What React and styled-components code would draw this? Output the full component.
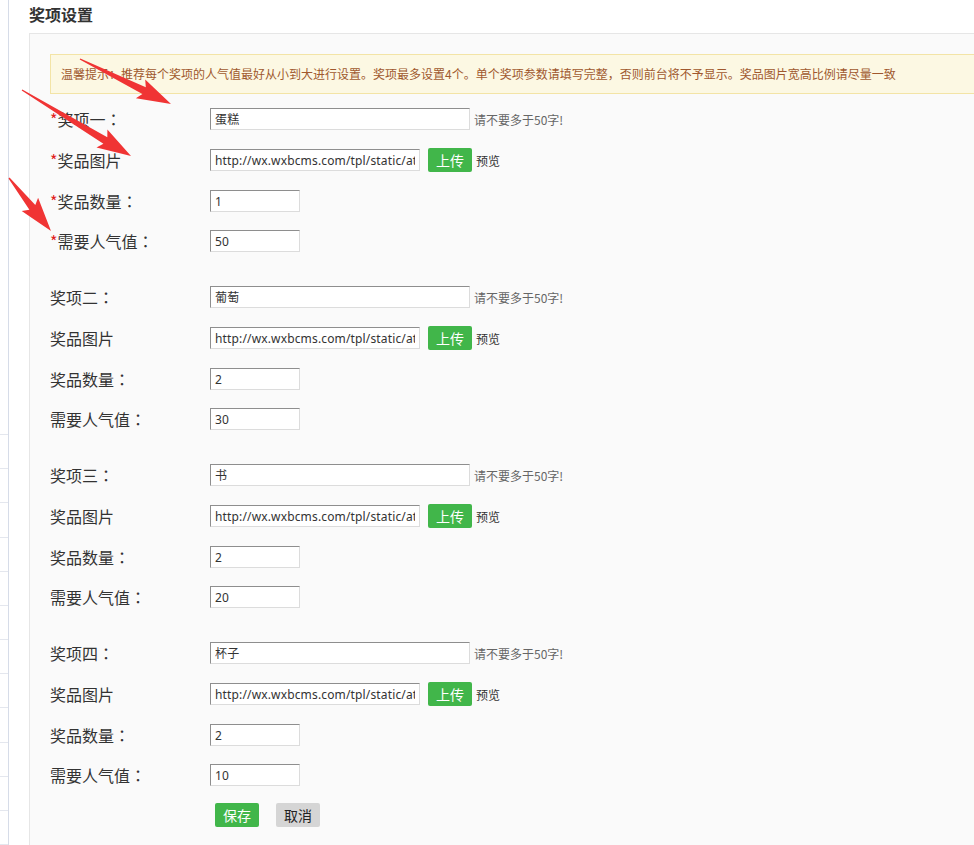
import React from "react";
import styled, { createGlobalStyle } from "styled-components";

const GlobalStyle = createGlobalStyle`
  html, body { margin: 0; padding: 0; overflow: hidden; background: #fff; }
  body { font-family: "Noto Sans", "Noto Sans CJK SC", sans-serif; color: #333; }
  * { box-sizing: border-box; }
`;

const Page = styled.div`
  position: relative;
  display: flex;
  width: 974px;
  height: 845px;
  overflow: hidden;
`;

const Sidebar = styled.div`
  flex: 0 0 9px;
  border-right: 1px solid #d6dce8;
  padding-top: 401px;
  display: flex;
  flex-direction: column;
`;

const SideItem = styled.div`
  height: 36.4px;
  border-bottom: 1px solid #e4e7ee;
`;

const Main = styled.div`
  flex: 1;
  padding-left: 20px;
  min-width: 0;
`;

const Title = styled.h3`
  margin: 0;
  height: 33px;
  font-size: 16px;
  font-weight: bold;
  line-height: 28px;
  color: #333;
  font-family: "Noto Sans CJK SC", sans-serif;
`;

const Panel = styled.div`
  width: 1000px;
  background: #fafafa;
  border: 1px solid #e6e6e6;
  padding: 20px 20px 30px 20px;
`;

const Alert = styled.div`
  height: 40px;
  background: #fcf8e3;
  border: 1px solid #f3e4a6;
  color: #a0582e;
  font-size: 12px;
  line-height: 38px;
  padding-left: 10px;
  margin-bottom: 14px;
  font-family: "Noto Sans CJK SC", sans-serif;
  white-space: nowrap;
`;

const Group = styled.div`
  margin-bottom: ${(p) => (p.$last ? 17 : 34)}px;
`;

const Row = styled.div`
  display: flex;
  align-items: center;
  margin-bottom: 18px;
  &:last-child { margin-bottom: 0; }
`;

const Label = styled.label`
  flex: 0 0 160px;
  font-size: 16px;
  color: #333;
  font-family: "Noto Sans CJK SC", sans-serif;
  line-height: 22px;
  white-space: nowrap;
`;

const Colon = styled.span`
  font-family: "Noto Sans CJK TC", sans-serif;
`;

const Star = styled.span`
  color: #e02020;
`;

const Input = styled.input`
  width: ${(p) => p.$w}px;
  height: 22px;
  padding: 0 4px;
  border: 1px solid #dcdcdc;
  border-top-color: #8e8e8e;
  border-left-color: #8e8e8e;
  background: #fff;
  font-size: 12px;
  letter-spacing: 0.15px;
  color: #333;
  font-family: "Noto Sans", "Noto Sans CJK SC", sans-serif;
  outline: none;
`;

const Hint = styled.span`
  margin-left: 4px;
  font-size: 12px;
  color: #666;
  font-family: "Noto Sans CJK SC", sans-serif;
`;

const Button = styled.button`
  height: 24px;
  width: 44px;
  padding: 0;
  border: none;
  border-radius: 2px;
  font-size: 14px;
  font-family: "Noto Sans CJK SC", sans-serif;
  background: ${(p) => (p.$gray ? "#d5d5d5" : "#41b64a")};
  color: ${(p) => (p.$gray ? "#222" : "#fff")};
  margin-left: ${(p) => p.$ml || 0}px;
  cursor: pointer;
`;

const Preview = styled.span`
  margin-left: 4px;
  font-size: 12px;
  color: #333;
  font-family: "Noto Sans CJK SC", sans-serif;
`;

const Actions = styled.div`
  display: flex;
  padding-left: 165px;
`;

const Overlay = styled.svg`
  position: absolute;
  left: 0;
  top: 0;
  pointer-events: none;
`;

const URL = "http://wx.wxbcms.com/tpl/static/attachment/prize.jpg";

const prizes = [
  { name: "奖项一", title: "蛋糕", count: "1", pop: "50", star: true },
  { name: "奖项二", title: "葡萄", count: "2", pop: "30" },
  { name: "奖项三", title: "书", count: "2", pop: "20" },
  { name: "奖项四", title: "杯子", count: "2", pop: "10" },
];

function arrowPoints(tx, ty, hx, hy) {
  const dx = hx - tx;
  const dy = hy - ty;
  const len = Math.hypot(dx, dy);
  const ux = dx / len;
  const uy = dy / len;
  const nx = -uy;
  const ny = ux;
  const L = 30;
  const bx = hx - ux * L;
  const by = hy - uy * L;
  const bbx = hx - ux * (L + 4);
  const bby = hy - uy * (L + 4);
  const p = (x, y) => `${x.toFixed(1)},${y.toFixed(1)}`;
  return [
    p(tx + nx * 0.6, ty + ny * 0.6),
    p(bx + nx * 3.8, by + ny * 3.8),
    p(bbx + nx * 10.5, bby + ny * 10.5),
    p(hx, hy),
    p(bbx - nx * 10.5, bby - ny * 10.5),
    p(bx - nx * 3.8, by - ny * 3.8),
    p(tx - nx * 0.6, ty - ny * 0.6),
  ].join(" ");
}

const arrows = [
  [80, 59, 171, 104],
  [22, 90, 131, 156],
  [9, 178, 51, 231],
];

export default function App() {
  return (
    <>
      <GlobalStyle />
      <Page>
        <Sidebar>
          {Array.from({ length: 13 }).map((_, i) => (
            <SideItem key={i} />
          ))}
        </Sidebar>
        <Main>
          <Title>奖项设置</Title>
          <Panel>
            <Alert>
              温馨提示：推荐每个奖项的人气值最好从小到大进行设置。奖项最多设置4个。单个奖项参数请填写完整，否则前台将不予显示。奖品图片宽高比例请尽量一致
            </Alert>
            {prizes.map((p, i) => (
              <Group key={p.name} $last={i === prizes.length - 1}>
                <Row>
                  <Label>
                    {p.star && <Star>*</Star>}
                    {p.name}
                    <Colon>：</Colon>
                  </Label>
                  <Input $w={260} defaultValue={p.title} />
                  <Hint>请不要多于50字!</Hint>
                </Row>
                <Row>
                  <Label>
                    {p.star && <Star>*</Star>}
                    奖品图片
                  </Label>
                  <Input $w={210} defaultValue={URL} />
                  <Button $ml={8}>上传</Button>
                  <Preview>预览</Preview>
                </Row>
                <Row>
                  <Label>
                    {p.star && <Star>*</Star>}
                    奖品数量
                    <Colon>：</Colon>
                  </Label>
                  <Input $w={90} defaultValue={p.count} />
                </Row>
                <Row>
                  <Label>
                    {p.star && <Star>*</Star>}
                    需要人气值
                    <Colon>：</Colon>
                  </Label>
                  <Input $w={90} defaultValue={p.pop} />
                </Row>
              </Group>
            ))}
            <Actions>
              <Button>保存</Button>
              <Button $gray $ml={17}>取消</Button>
            </Actions>
          </Panel>
        </Main>
        <Overlay width="974" height="845" viewBox="0 0 974 845">
          {arrows.map((a, i) => (
            <polygon key={i} points={arrowPoints(...a)} fill="#f03434" />
          ))}
        </Overlay>
      </Page>
    </>
  );
}
